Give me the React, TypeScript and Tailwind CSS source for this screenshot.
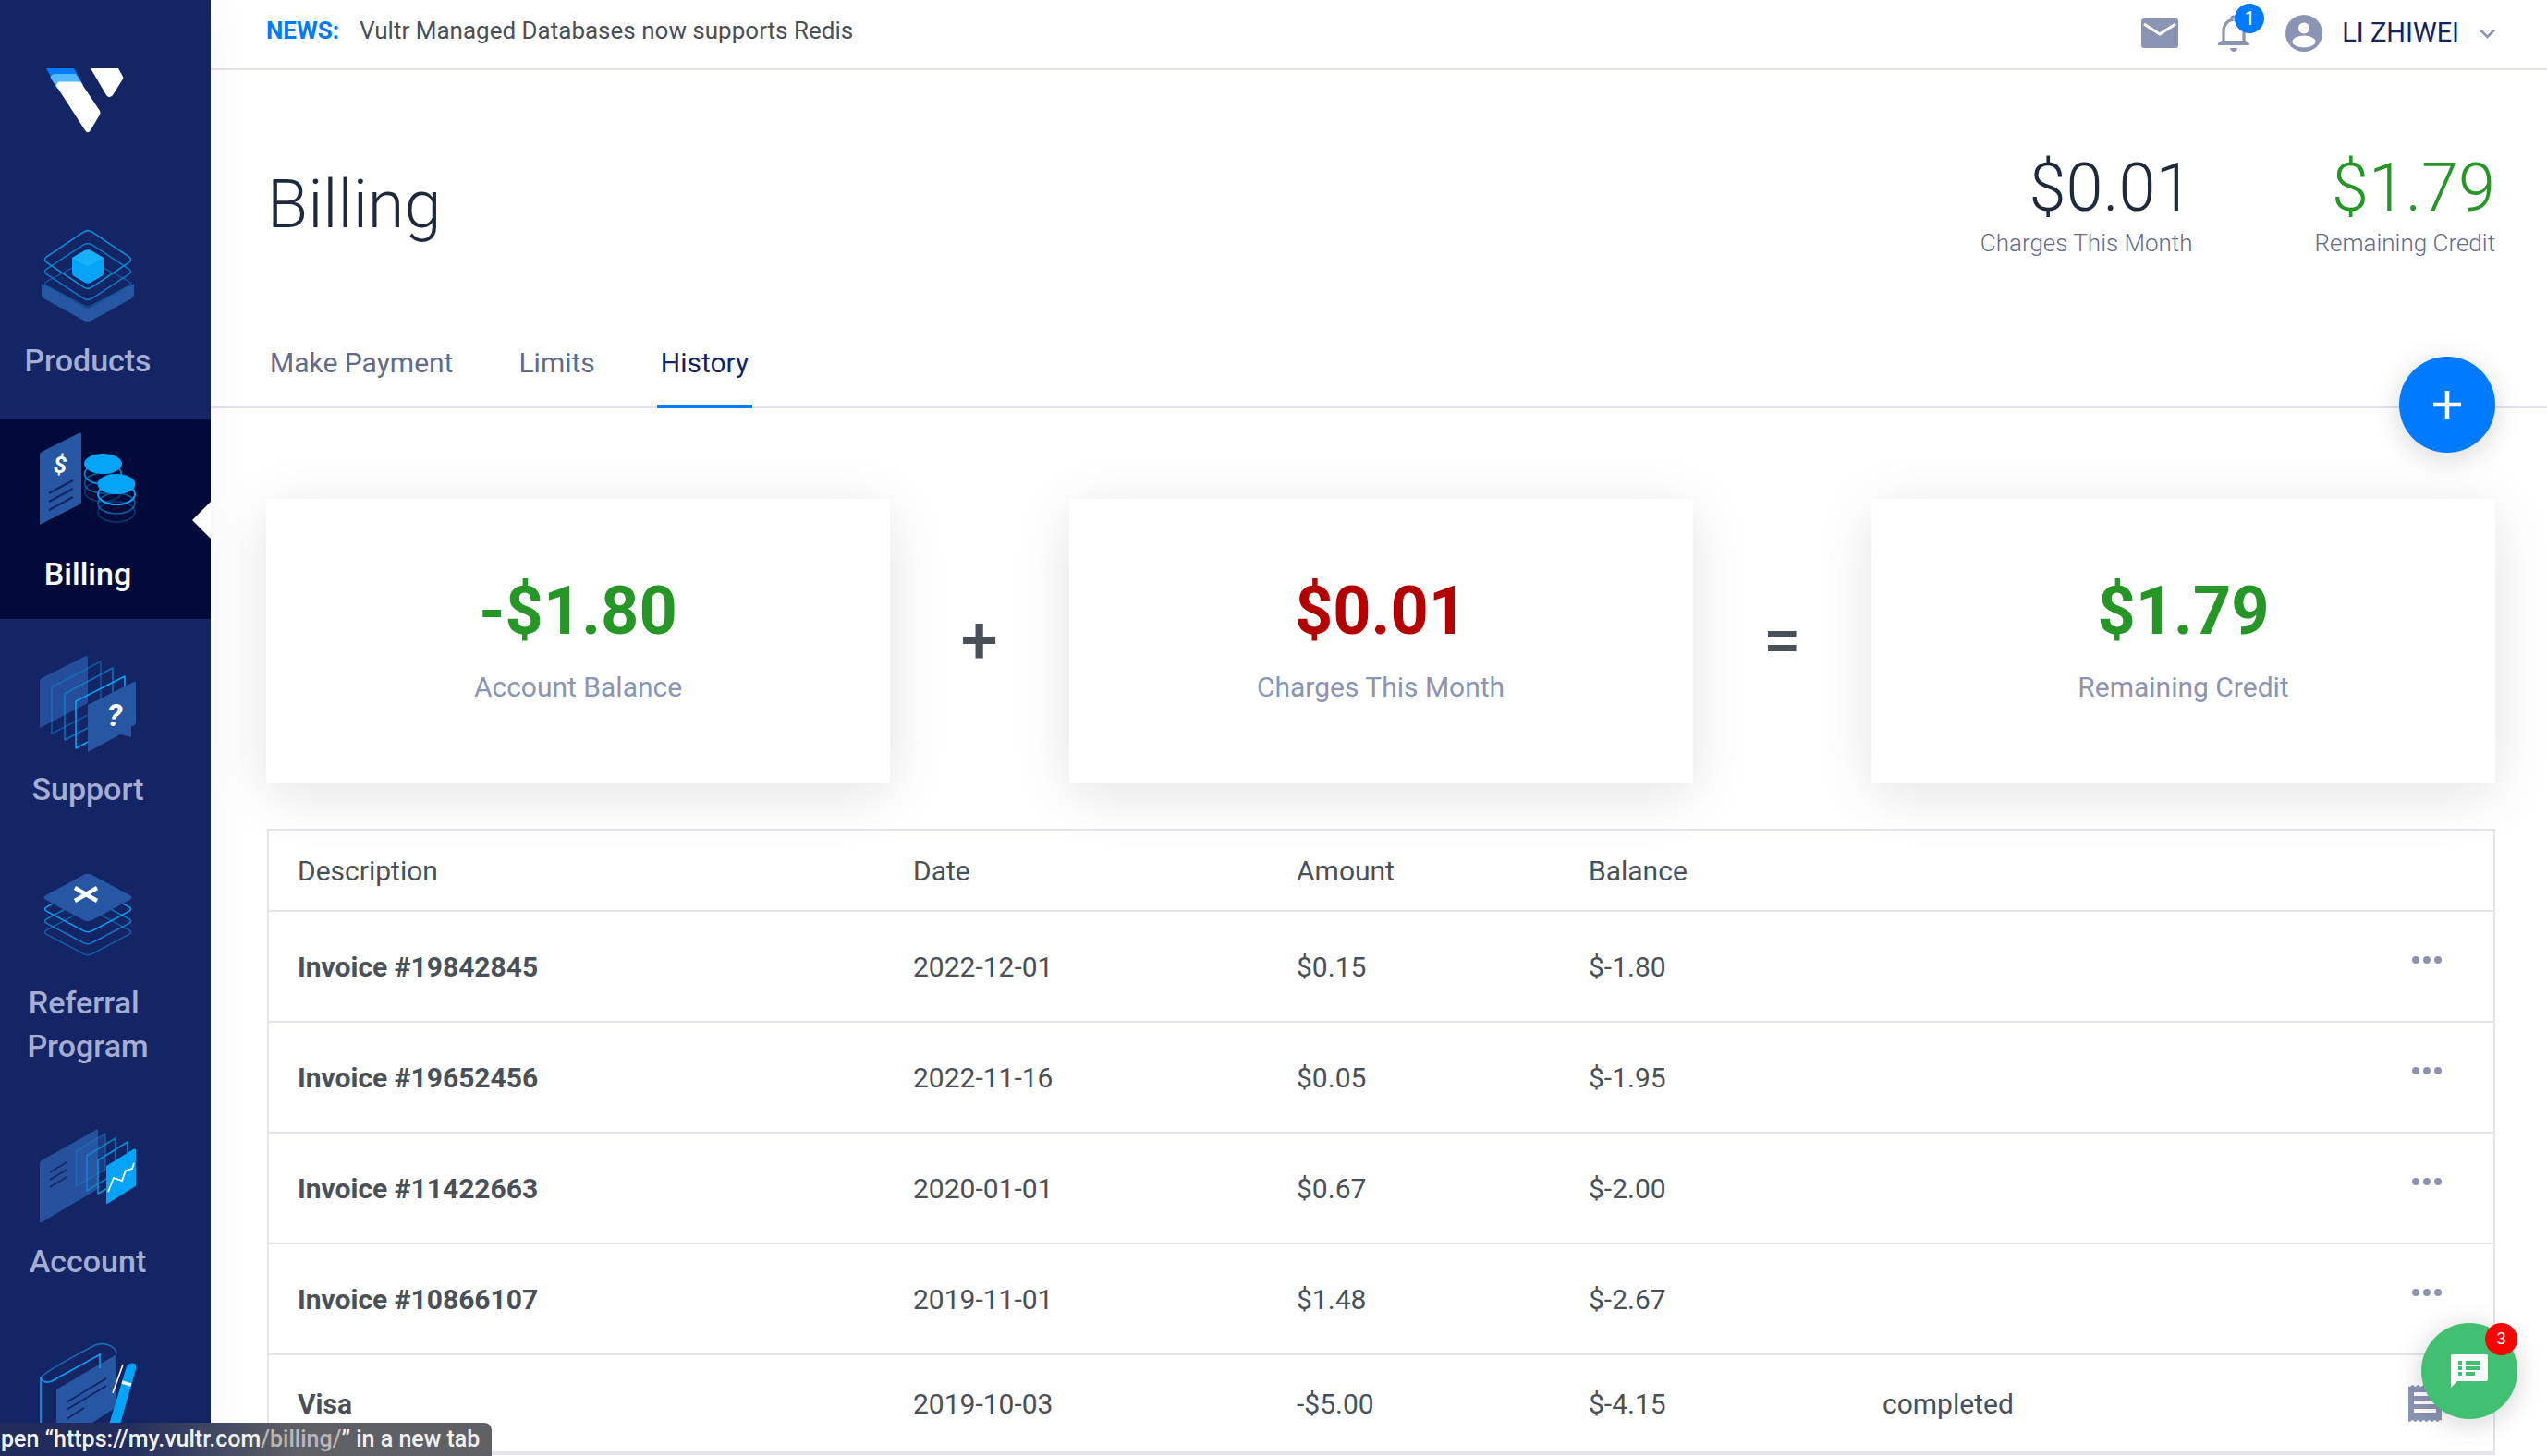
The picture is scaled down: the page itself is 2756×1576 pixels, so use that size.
import React from "react";

const BLUE = "#2756a3";
const SKY = "#03a4f5";
const LINE = "#0c8fd6";

function rhomb(cx: number, cy: number, rx: number, ry: number) {
  const t = 0.1;
  const p = [
    [cx, cy - ry],
    [cx + rx, cy],
    [cx, cy + ry],
    [cx - rx, cy],
  ];
  const lerp = (a: number[], b: number[], k: number) => [a[0] + (b[0] - a[0]) * k, a[1] + (b[1] - a[1]) * k];
  let d = "";
  for (let i = 0; i < 4; i++) {
    const c = p[i];
    const prev = p[(i + 3) % 4];
    const next = p[(i + 1) % 4];
    const a = lerp(c, prev, t);
    const b = lerp(c, next, t);
    d += `${i === 0 ? "M" : "L"}${a[0]},${a[1]} Q${c[0]},${c[1]} ${b[0]},${b[1]} `;
  }
  return d + "Z";
}

function Logo() {
  return (
    <svg viewBox="50 74 84 71" className="w-[84px] h-[71px]">
      <path d="M50,74 L80,74 L90,92 L60,92 Z" fill="#007bff" />
      <path d="M54.5,84 Q55,80 60,80 L82,80 L90,92 L62,96 Z" fill="#51b9ff" />
      <path d="M61,93 Q60.5,88.5 66,88.5 L87,88.5 L108,120 Q109,122 108,124 L98,141 Q95,145.5 92,141 Z" fill="#fff" />
      <path d="M98,74 L128,74 L133,83 Q134,85 132,87 L122,103 Q118,107 115,103 Z" fill="#fff" />
    </svg>
  );
}

function ProductsIcon() {
  return (
    <svg viewBox="0 0 100 102" className="w-[100px] h-[102px]">
      <path d="M0,60 L0,71 Q0,75 4,77 L46,100 Q50,102 54,100 L96,77 Q100,75 100,71 L100,60 L54,85 Q50,87 46,85 Z" fill={BLUE} />
      <path d={rhomb(50, 60, 49, 26)} fill="none" stroke={LINE} strokeWidth="1.6" opacity="0.45" />
      <path d={rhomb(50, 47, 49, 32)} fill="none" stroke={LINE} strokeWidth="1.6" opacity="0.8" />
      <path d={rhomb(50, 34, 49, 33)} fill="none" stroke={LINE} strokeWidth="1.6" />
      <path d="M33,32 L47,24 Q50,22.5 53,24 L67,32 L67,49 Q67,51 65,52 L53,59 Q50,60.5 47,59 L35,52 Q33,51 33,49 Z" fill="#05a3f5" />
      <path d="M33,32 L47,24 Q50,22.5 53,24 L67,32 L53,40 Q50,41.5 47,40 Z" fill="#16b0ff" />
    </svg>
  );
}

function BillingIcon() {
  return (
    <svg viewBox="0 0 104 100" className="w-[104px] h-[100px]">
      <path d="M0,24 Q0,22 2,21 L43,0.5 Q45,0 45,2 L45,75 Q45,77 43,78 L0,100 Z" fill={BLUE} />
      <text x="22" y="44" textAnchor="middle" fontSize="26" fontWeight="700" fontStyle="italic" fill="#fff" fontFamily="Roboto, sans-serif">$</text>
      <g stroke="#142463" strokeWidth="2">
        <path d="M10,66 L36,52" />
        <path d="M10,75 L36,61" />
        <path d="M10,84 L36,70" />
      </g>
      <g fill="none" strokeWidth="1.6">
        <ellipse cx="68.5" cy="64" rx="20" ry="11" stroke={LINE} opacity="0.35" />
        <ellipse cx="68.5" cy="55" rx="20" ry="11" stroke={LINE} opacity="0.6" />
        <ellipse cx="68.5" cy="45" rx="20" ry="11" stroke={LINE} />
      </g>
      <ellipse cx="68.5" cy="34" rx="20.5" ry="11" fill={SKY} />
      <g fill="none" strokeWidth="1.6">
        <ellipse cx="83" cy="86" rx="20" ry="11" stroke={LINE} opacity="0.35" />
        <ellipse cx="83" cy="77" rx="20" ry="11" stroke={LINE} opacity="0.65" />
        <ellipse cx="83" cy="67" rx="20" ry="11" stroke={SKY} strokeWidth="2" />
      </g>
      <ellipse cx="83" cy="56" rx="20.5" ry="11" fill={SKY} />
    </svg>
  );
}

function SupportIcon() {
  return (
    <svg viewBox="0 0 104 104" className="w-[104px] h-[104px]">
      <path d="M0,27 Q0,25 2,24 L50,0 Q52,0 52,2 L52,51 L0,78 Z" fill={BLUE} opacity="0.85" />
      <path d="M13,34 L66,6 L66,57 L13,84 Z" fill="none" stroke={LINE} strokeWidth="1.6" strokeLinejoin="round" opacity="0.45" />
      <path d="M27,41 L79,13 L79,64 L27,91 Z" fill="none" stroke={LINE} strokeWidth="1.6" strokeLinejoin="round" opacity="0.7" />
      <path d="M39,49 L92,22 L92,72 L39,100 Z" fill="none" stroke={SKY} strokeWidth="1.6" strokeLinejoin="round" />
      <path d="M52,53 L102,28 Q104,27 104,29 L104,72 Q104,74 102,75 L99,76.5 L99,88 L87,85 L52,104 Z" fill={BLUE} />
      <text x="81" y="76" textAnchor="middle" fontSize="34" fontWeight="700" fontStyle="italic" fill="#fff" fontFamily="Roboto, sans-serif">?</text>
    </svg>
  );
}

function ReferralIcon() {
  return (
    <svg viewBox="0 0 100 92" className="w-[100px] h-[92px]">
      <path d={rhomb(50, 64, 49, 26)} fill="none" stroke={LINE} strokeWidth="1.6" opacity="0.55" />
      <path d={rhomb(50, 52, 49, 26)} fill="none" stroke={LINE} strokeWidth="1.6" opacity="0.85" />
      <path d={rhomb(50, 39, 49, 26)} fill="none" stroke={SKY} strokeWidth="1.6" />
      <path d={rhomb(50, 26.5, 50, 27)} fill={BLUE} />
      <path d="M36,16 L60,30 M60,16 L36,30" stroke="#fff" strokeWidth="4.5" />
    </svg>
  );
}

function AccountIcon() {
  return (
    <svg viewBox="0 0 104 102" className="w-[104px] h-[102px]">
      <path d="M0,37 Q0,35 2,34 L61,1 Q63,0 63,2 L63,65 L2,101 Q0,102 0,100 Z" fill={BLUE} opacity="0.9" />
      <g stroke="#142463" strokeWidth="2" opacity="0.85">
        <path d="M11,47 L29,36" />
        <path d="M11,55 L29,44" />
        <path d="M11,63 L29,52" />
      </g>
      <path d="M39,24 L71,5 L71,44 L39,62 Z" fill="#2a62b0" fillOpacity="0.35" stroke={LINE} strokeWidth="1.6" strokeLinejoin="round" strokeOpacity="0.4" />
      <path d="M51,29 L82,10 L82,48 L51,67 Z" fill="none" stroke={LINE} strokeWidth="1.6" strokeLinejoin="round" strokeOpacity="0.8" />
      <path d="M63,34 L95,14 L95,52 L63,70 Z" fill="none" stroke={LINE} strokeWidth="1.6" strokeLinejoin="round" />
      <path d="M72,40 L102,21.5 Q104,21 104,23 L104,61 Q104,62 102,63 L73,81 Q72,81.5 72,80 Z" fill={SKY} />
      <path d="M74,68 L80,53 L89,56 L93,45 L100,43 L102,37" fill="none" stroke="#fff" strokeWidth="1.8" />
    </svg>
  );
}

function BookIcon() {
  return (
    <svg viewBox="0 0 104 120" className="w-[104px] h-[120px]">
      <path d="M18,51 L83,13 L83,70 L18,112 Z" fill={BLUE} />
      <path d="M29,65 L72,39 M29,73 L72,47 M29,83 L48,71" stroke="#142463" strokeWidth="1.8" />
      <path d="M1,38 C8,30 50,8 60,3 C72,-1 83,5 83,13" fill="none" stroke="#1a6ab0" strokeWidth="1.6" />
      <path d="M1,38 C3,43 8,44 13,42 L65,13 L65,28" fill="none" stroke={SKY} strokeWidth="1.6" />
      <path d="M1,38 L1,120" stroke={SKY} strokeWidth="1.6" />
      <path d="M79,55 L90,24" stroke="#fff" strokeWidth="1.6" />
      <path d="M94,26 Q98,21 103,23 Q105,25 104,29 L86,92 L74,92 Z" fill={SKY} />
      <path d="M89,43 L99,46" stroke="#e8f6ff" strokeWidth="3.5" />
    </svg>
  );
}

function Mail() {
  return (
    <svg viewBox="0 0 40 32" className="w-[40px] h-[32px]">
      <rect width="40" height="32" rx="3" fill="#8b94b3" />
      <path d="M3,6 L20,17 L37,6" fill="none" stroke="#fff" strokeWidth="3" />
    </svg>
  );
}

function Bell() {
  return (
    <svg viewBox="0 0 34 40" className="w-[34px] h-[40px]">
      <path d="M6,31 L6,18 C6,10 11,6 15,5.5 L15,3 Q17,1 19,3 L19,5.5 C24,6 28,10 28,18 L28,31" fill="none" stroke="#8b94b3" strokeWidth="3.2" />
      <path d="M0,33 L34,33 L34,31 L30,28 L4,28 L0,31 Z" fill="#8b94b3" />
      <path d="M13,36 L21,36 Q20,40 17,40 Q14,40 13,36 Z" fill="#8b94b3" />
    </svg>
  );
}

function Avatar() {
  return (
    <svg viewBox="0 0 40 40" className="w-[40px] h-[40px]">
      <circle cx="20" cy="20" r="20" fill="#8b94b3" />
      <circle cx="20" cy="14.5" r="6" fill="#fff" />
      <ellipse cx="20" cy="29" rx="12.5" ry="6.5" fill="#fff" />
    </svg>
  );
}

function Receipt() {
  return (
    <svg viewBox="0 0 36 40" className="w-[36px] h-[40px]">
      <path d="M0,1 Q1.5,3 3,1 T6,1 T9,1 T12,1 T15,1 T18,1 T21,1 T24,1 T27,1 T30,1 T33,1 T36,1 L36,39 Q34.5,37 33,39 T30,39 T27,39 T24,39 T21,39 T18,39 T15,39 T12,39 T9,39 T6,39 T3,39 T0,39 Z" fill="#8b94b3" />
      <path d="M6,10 H30 M6,19 H30 M6,28 H30" stroke="#fff" strokeWidth="4" />
    </svg>
  );
}

function ChatGlyph() {
  return (
    <svg viewBox="0 0 40 36" className="w-[40px] h-[36px]">
      <path d="M2,0 H38 Q40,0 40,2 V27 Q40,29 38,29 H7 L0,36 V2 Q0,0 2,0 Z" fill="#fff" />
      <g fill="#41c072">
        <rect x="8" y="7" width="4" height="4" />
        <rect x="16" y="7" width="16" height="4" />
        <rect x="8" y="13" width="4" height="4" />
        <rect x="16" y="13" width="16" height="4" />
        <rect x="8" y="19" width="4" height="4" />
        <rect x="16" y="19" width="10" height="4" />
      </g>
    </svg>
  );
}

function Dots() {
  return (
    <div className="flex gap-[4px] -translate-y-[7px]">
      <span className="w-[8px] h-[8px] rounded-full bg-[#8b94b3]" />
      <span className="w-[8px] h-[8px] rounded-full bg-[#8b94b3]" />
      <span className="w-[8px] h-[8px] rounded-full bg-[#8b94b3]" />
    </div>
  );
}

const rows = [
  ["Invoice #19842845", "2022-12-01", "$0.15", "$-1.80"],
  ["Invoice #19652456", "2022-11-16", "$0.05", "$-1.95"],
  ["Invoice #11422663", "2020-01-01", "$0.67", "$-2.00"],
  ["Invoice #10866107", "2019-11-01", "$1.48", "$-2.67"],
];

const cols = "grid grid-cols-[666px_415px_316px_318px_1fr] items-center pl-[31px] pr-[56px]";

function Stat({ value, label, color }: { value: string; label: string; color: string }) {
  return (
    <div className="flex-none w-[675px] h-[308px] bg-white shadow-[0_12px_60px_rgba(0,0,0,0.11)] flex flex-col items-center pt-[86px]">
      <div className={`text-[72px] leading-[72px] font-bold ${color}`}>{value}</div>
      <div className="mt-[26px] text-[30px] leading-[40px] text-[#8b94b3]">{label}</div>
    </div>
  );
}

export default function App() {
  return (
    <div className="relative flex h-[1576px] overflow-hidden bg-white text-[#495057] [font-family:Roboto,sans-serif]">
      <aside className="relative z-10 flex-none w-[228px] h-full bg-[#142566] shadow-[0_0_50px_rgba(0,0,0,0.05)]">
        <div className="h-[224px] pt-[74px] pl-[50px]">
          <Logo />
        </div>
        <nav className="text-[34px] leading-[47px] font-medium text-[#a4aed3] text-center">
          <a className="block w-full h-[230px] pt-[23px]">
            <div className="w-[190px] flex flex-col items-center">
              <ProductsIcon />
              <span className="mt-[18px]">Products</span>
            </div>
          </a>
          <a className="relative block h-[216px] pt-[14px] bg-[#010a38] text-white">
            <div className="w-[190px] flex flex-col items-center">
              <BillingIcon />
              <span className="mt-[30px]">Billing</span>
            </div>
            <span className="absolute right-0 top-[89px] w-0 h-0 border-y-[20px] border-y-transparent border-r-[20px] border-r-white" />
          </a>
          <a className="block pt-[40px]">
            <div className="w-[190px] flex flex-col items-center">
              <SupportIcon />
              <span className="mt-[17px]">Support</span>
            </div>
          </a>
          <a className="block pt-[67px]">
            <div className="w-[190px] flex flex-col items-center">
              <ReferralIcon />
              <span className="mt-[25px]">Referral{"\u00a0"}<br />Program</span>
            </div>
          </a>
          <a className="block pt-[66px]">
            <div className="w-[190px] flex flex-col items-center">
              <AccountIcon />
              <span className="mt-[18px]">Account</span>
            </div>
          </a>
          <a className="block pt-[64px]">
            <div className="w-[190px] flex flex-col items-center">
              <BookIcon />
            </div>
          </a>
        </nav>
      </aside>

      <main className="flex-1 min-w-0 flex flex-col">
        <header className="flex-none h-[76px] border-b-2 border-[#e4e5ec] flex items-center pl-[60px] pr-[56px] pb-[8px]">
          <span className="text-[26px] font-bold text-[#007bff]">NEWS:</span>
          <span className="ml-[22px] text-[26px] text-[#495057]">Vultr Managed Databases now supports Redis</span>
          <div className="ml-auto flex items-center translate-y-[3px]">
            <Mail />
            <div className="relative ml-[43px]">
              <Bell />
              <span className="absolute left-[18px] -top-[12px] w-[32px] h-[32px] rounded-full bg-[#007bff] text-white text-[20px] leading-[32px] text-center">1</span>
            </div>
            <div className="ml-[39px]"><Avatar /></div>
            <span className="ml-[21px] -mt-[2px] text-[29px] leading-[40px] text-[#142463]">LI ZHIWEI</span>
            <svg viewBox="0 0 17 11" className="ml-[22px] w-[17px] h-[11px]">
              <path d="M1,1.5 L8.5,9 L16,1.5" fill="none" stroke="#8b94b3" strokeWidth="2.6" />
            </svg>
          </div>
        </header>

        <section className="flex-none pl-[61px] pr-[56px] h-[256px] flex items-start justify-between">
          <h1 className="mt-[104px] text-[72px] leading-[84px] font-light text-[#1e2a3b]">Billing</h1>
          <div className="mt-[90px] flex gap-[132px]">
            <div className="flex flex-col items-end">
              <div className="text-[72px] leading-[76px] font-light text-[#1e2a3b]">$0.01</div>
              <div className="mt-[4px] text-[26px] leading-[34px] font-light text-[#646a87]">Charges This Month</div>
            </div>
            <div className="flex flex-col items-end">
              <div className="text-[72px] leading-[76px] font-light text-[#269626]">$1.79</div>
              <div className="mt-[4px] text-[26px] leading-[34px] font-light text-[#646a87]">Remaining Credit</div>
            </div>
          </div>
        </section>

        <nav className="flex-none h-[110px] pl-[60px] border-b-2 border-[#e4e5ec] flex items-end gap-[63px] text-[30px] text-[#646a87]">
          <a className="px-[4px] h-[70px]">Make Payment</a>
          <a className="px-[4px] h-[70px]">Limits</a>
          <a className="px-[4px] h-[72px] -mb-[2px] border-b-4 border-[#007bff] text-[#142463]">History</a>
        </nav>

        <div className="flex-none mt-[98px] ml-[60px] mr-[56px] flex items-center">
          <Stat value="-$1.80" label="Account Balance" color="text-[#269626]" />
          <div className="flex-1 text-center text-[72px] leading-[72px] font-medium text-[#495057]">+</div>
          <Stat value="$0.01" label="Charges This Month" color="text-[#b30000]" />
          <div className="flex-1 text-center text-[72px] leading-[72px] font-medium text-[#495057]">=</div>
          <Stat value="$1.79" label="Remaining Credit" color="text-[#269626]" />
        </div>

        <div className="flex-none mt-[49px] ml-[61px] mr-[56px] border-2 border-[#e4e5ec] text-[30px]">
          <div className={`${cols} h-[88px] border-b-2 border-[#e4e5ec]`}>
            <span>Description</span>
            <span>Date</span>
            <span>Amount</span>
            <span>Balance</span>
          </div>
          {rows.map((r) => (
            <div key={r[0]} className={`${cols} h-[120px] border-b-2 border-[#e4e5ec] bg-white`}>
              <span className="font-bold">{r[0]}</span>
              <span>{r[1]}</span>
              <span>{r[2]}</span>
              <span>{r[3]}</span>
              <div className="flex justify-end"><Dots /></div>
            </div>
          ))}
          <div className={`${cols} h-[106px] border-b-2 border-[#e4e5ec] bg-white`}>
            <span className="font-bold">Visa</span>
            <span>2019-10-03</span>
            <span>-$5.00</span>
            <span>$-4.15</span>
            <div className="flex items-center justify-between">
              <span>completed</span>
              <Receipt />
            </div>
          </div>
        </div>
      </main>

      <button className="absolute left-[2596px] top-[386px] w-[104px] h-[104px] rounded-full bg-[#007bff] shadow-[0_6px_30px_rgba(0,0,0,0.16)] flex items-center justify-center z-20">
        <svg viewBox="0 0 30 30" className="w-[30px] h-[30px]">
          <path d="M15,0 V30 M0,15 H30" stroke="#fff" strokeWidth="4.5" />
        </svg>
      </button>

      <button className="absolute left-[2620px] top-[1432px] w-[104px] h-[104px] rounded-full bg-[#41c072] shadow-[0_4px_30px_rgba(0,0,0,0.18)] flex items-center justify-center z-20">
        <ChatGlyph />
        <span className="absolute right-0 top-0 w-[35px] h-[35px] rounded-full bg-[#ff0000] text-white text-[18px] leading-[35px] text-center [font-family:'Liberation_Sans',sans-serif]">3</span>
      </button>

      <div className="absolute left-0 bottom-0 w-[532px] h-[36px] rounded-tr-lg pl-[1px] z-30 bg-linear-to-r from-[#222c5c] from-[25%] to-[#5f6064] to-[60%] text-[25px] leading-[36px] font-medium text-[#f2f2f2] whitespace-nowrap">
        pen “https://my.vultr.com<span className="text-[#b8b8b8]">/billing/</span>” in a new tab
      </div>
    </div>
  );
}
